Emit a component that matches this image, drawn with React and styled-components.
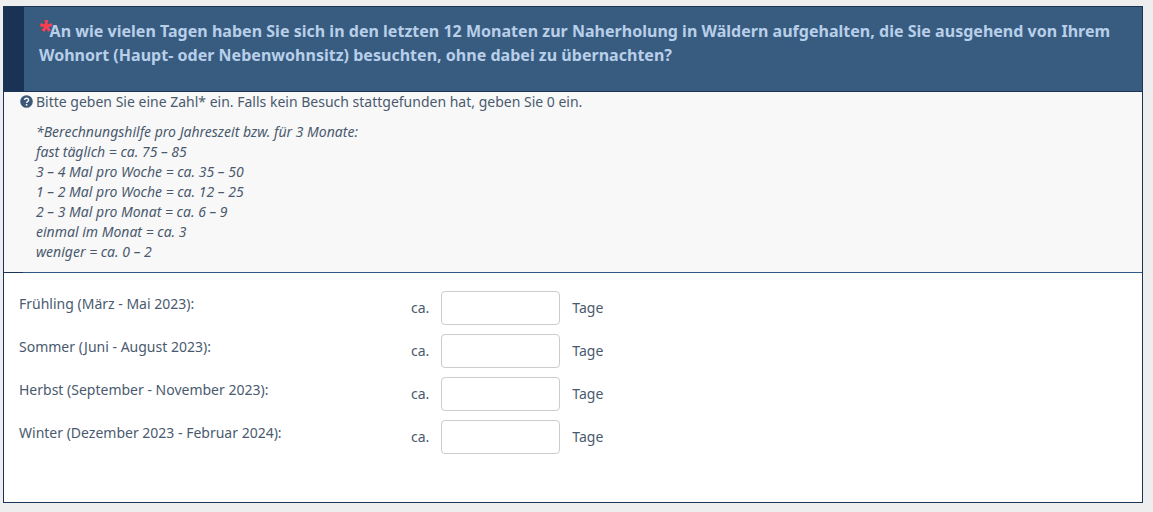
import React from 'react';
import styled, {createGlobalStyle} from "styled-components";

const GlobalStyle = createGlobalStyle`
  html, body {
    margin: 0;
    padding: 0;
    background: #eeeeee;
  }
  body {
    font-family: "Noto Sans", sans-serif;
    font-size: 14px;
    color: #4a5a6e;
  }
  * {
    box-sizing: border-box;
  }
`;

const Page = styled.div`
  width: 1153px;
  height: 512px;
  padding: 6px 10px 9px 3px;
  overflow: hidden;
`;
const Question = styled.div`
  height: 497px;
  display: flex;
  flex-direction: column;
  background: #fff;
  border: 1px solid #1b3557;
`;
const Header = styled.div`
  height: 85px;
  display: flex;
  background: #375c80;
  border-bottom: 1px solid #1b3557;
`;
const HeaderBar = styled.div`
  flex: none;
  width: 20px;
  background: #1a3253;
`;
const Title = styled.h2`
  margin: 0;
  padding: 12px 20px 0 15px;
  font-size: 16px;
  line-height: 24px;
  font-weight: 700;
  letter-spacing: 0.02px;
  color: #b9cfe9;
`;
const Star = styled.span`
  margin-right: -3px;
  color: #ff3b4e;
  font-size: 25px;
  line-height: 16px;
  vertical-align: -2px;
`;
const Help = styled.div`
  height: 181px;
  padding: 0 15px;
  background: #f8f8f8;
  border-bottom: 1px solid;
  border-image: linear-gradient(to right, #1a3253 20px, #2f5a85 20px) 1;
`;
const Hint = styled.div`
  display: flex;
  align-items: center;
  gap: 3px;
  height: 19px;
  margin-left: 1px;
`;
const Calc = styled.div`
  margin: 11px 0 0 17px;
  font-style: italic;
  line-height: 20px;
`;
const Rows = styled.div`
  padding-top: 18px;
  display: flex;
  flex-direction: column;
  gap: 9px;
`;
const Row = styled.div`
  height: 34px;
  display: flex;
`;
const Label = styled.div`
  width: 407px;
  padding: 1px 0 0 15px;
  line-height: 24px;
`;
const Unit = styled.div`
  line-height: 34px;
`;
const Input = styled.input`
  width: 119px;
  height: 34px;
  margin: 0 12px;
  background: #fff;
  border: 1px solid #ccc;
  border-radius: 4px;
`;

const InfoIcon = () => (
    <svg width="13" height="13" viewBox="0 0 13 13">
        <circle cx="6.5" cy="6.5" r="6.3" fill="#3b5878"/>
        <path d="M4.6 5.1a2 1.8 0 1 1 2.9 1.6c-.6.3-.9.6-.9 1.2" fill="none" stroke="#f8f8f8" strokeWidth="1.4"/>
        <rect x="5.8" y="9" width="1.6" height="1.6" fill="#f8f8f8"/>
    </svg>
);

const calcLines = [
    "*Berechnungshilfe pro Jahreszeit bzw. für 3 Monate:",
    "fast täglich = ca. 75 – 85",
    "3 – 4 Mal pro Woche = ca. 35 – 50",
    "1 – 2 Mal pro Woche = ca. 12 – 25",
    "2 – 3 Mal pro Monat = ca. 6 – 9",
    "einmal im Monat = ca. 3",
    "weniger = ca. 0 – 2",
];

const seasons = [
    "Frühling (März - Mai 2023):",
    "Sommer (Juni - August 2023):",
    "Herbst (September - November 2023):",
    "Winter (Dezember 2023 - Februar 2024):",
];

const App = () => {
    return (
        <Page>
            <GlobalStyle/>
            <Question>
                <Header>
                    <HeaderBar/>
                    <Title>
                        <Star>*</Star>An wie vielen Tagen haben Sie sich in den letzten 12 Monaten zur Naherholung in Wäldern aufgehalten, die Sie ausgehend von Ihrem Wohnort (Haupt- oder Nebenwohnsitz) besuchten, ohne dabei zu übernachten?
                    </Title>
                </Header>
                <Help>
                    <Hint>
                        <InfoIcon/>
                        Bitte geben Sie eine Zahl* ein. Falls kein Besuch stattgefunden hat, geben Sie 0 ein.
                    </Hint>
                    <Calc>
                        {calcLines.map(line => <div key={line}>{line}</div>)}
                    </Calc>
                </Help>
                <Rows>
                    {seasons.map(season => (
                        <Row key={season}>
                            <Label>{season}</Label>
                            <Unit>ca.</Unit>
                            <Input type="text"/>
                            <Unit>Tage</Unit>
                        </Row>
                    ))}
                </Rows>
            </Question>
        </Page>
    );
};

export default App;
